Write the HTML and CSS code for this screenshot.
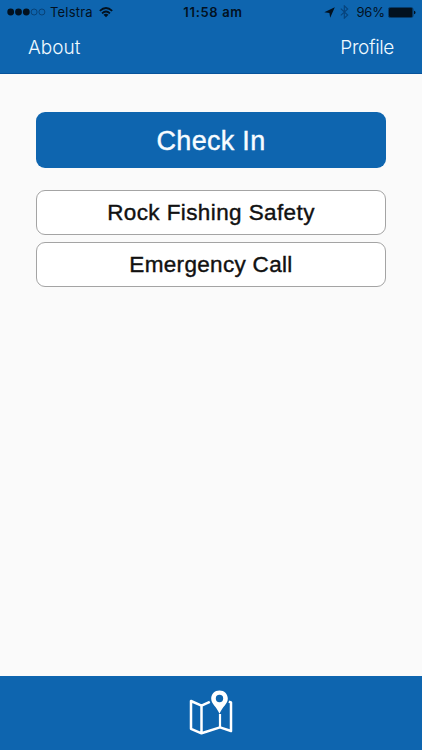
FILE: index.html
```html
<!DOCTYPE html>
<html lang="en">
<head>
<meta charset="utf-8">
<title>Check In</title>
<link rel="stylesheet" href="styles.css">
</head>
<body>
<div class="app">
  <header class="header">
    <div class="status">
      <div class="status-left">
        <svg class="signal" width="39" height="8" viewBox="0 0 39 8">
          <circle cx="3.7" cy="4" r="3.4"/><circle cx="11.5" cy="4" r="3.4"/><circle cx="19.3" cy="4" r="3.4"/>
          <circle class="ring" cx="27.1" cy="4" r="3"/><circle class="ring" cx="34.9" cy="4" r="3"/>
        </svg>
        <span class="carrier">Telstra</span>
        <svg class="wifi" width="14" height="11" viewBox="0 0 14 11">
          <path class="arc" d="M.8 3.9Q7-1.9 13.2 3.9M3 6.3Q7 2.7 11 6.3"/>
          <path d="M4.5 7.7Q7 5.8 9.5 7.7L7 10.3Z"/>
        </svg>
      </div>
      <span class="time">11:58 am</span>
      <div class="status-right">
        <svg class="location" width="11" height="11" viewBox="0 0 11 11"><path d="M10.8.3 6.2 10.8 5.4 6 .3 5.3Z"/></svg>
        <svg class="bluetooth" width="9" height="14" viewBox="0 0 9 14"><path d="M.8 3.7 7.7 10 4.3 13.2V.8L7.7 4 .8 10.3"/></svg>
        <span class="percent">96%</span>
        <svg class="battery" width="28" height="11" viewBox="0 0 28 11">
          <rect class="case" x=".4" y=".5" width="24.6" height="10" rx="1.8"/>
          <rect x="1" y="1" width="23.4" height="9" rx="1"/>
          <path d="M26 3.7Q27.5 4 27.5 5.5T26 7.3Z"/>
        </svg>
      </div>
    </div>
    <nav class="nav"><span class="about">About</span><span class="profile">Profile</span></nav>
  </header>
  <main class="content">
    <button class="button primary"><span>Check In</span></button>
    <button class="button secondary safety"><span>Rock Fishing Safety</span></button>
    <button class="button secondary emergency"><span>Emergency Call</span></button>
  </main>
  <footer class="footer">
    <svg class="map" width="44" height="46" viewBox="0 0 44 46">
      <path class="fold" d="M20.8 11.8 12.5 15.6 2 11V38.8L12.5 43.3 31 37.4 42 41V12.4L39.8 11.6M12.5 15.6V43.3"/>
      <path class="crease" d="M31 24V37.4"/>
      <path class="pin" fill-rule="evenodd" d="M30.5.5C25.7.5 22.2 4 22.2 8.6C22.2 14 27.4 16.5 30.5 23.8C33.6 16.5 38.8 14 38.8 8.6C38.8 4 35.3.5 30.5.5ZM30.5 4.8A3.7 3.7 0 1 1 30.5 12.2A3.7 3.7 0 1 1 30.5 4.8Z"/>
    </svg>
  </footer>
</div>
</body>
</html>
```
FILE: styles.css
```css
* { box-sizing: border-box; }
body { margin: 0; font-family: "Liberation Sans", sans-serif; }
.app { width: 422px; height: 750px; display: flex; flex-direction: column; background: #fafafa; overflow: hidden; }
.header { height: 74px; background: #0e65af; border-bottom: 1px solid #07539b; }
.status { height: 23px; display: grid; grid-template-columns: 1fr auto 1fr; align-items: center; color: #02111f; font: 13px/23px Inter, sans-serif; white-space: nowrap; }
.status svg { fill: #02111f; flex: none; }
.status-left, .status-right { display: flex; align-items: center; }
.status-left { padding-left: 7px; }
.status-right { justify-content: flex-end; padding-right: 6px; }
.signal .ring { fill: none; stroke: #063968; stroke-width: .8; }
.carrier { margin-left: 4px; letter-spacing: .2px; line-height: 24px; }
.wifi { margin-left: 6px; }
.wifi .arc { fill: none; stroke: #02111f; stroke-width: 1.7; }
.time { padding-left: 4px; font-weight: 600; letter-spacing: .65px; line-height: 24px; }
.location { margin-right: 5px; }
.bluetooth { margin-right: 7px; }
.status .bluetooth { fill: none; stroke: #07437b; stroke-width: 1.1; }
.percent { margin-right: 3px; letter-spacing: -.1px; line-height: 24px; }
.battery .case { fill: none; stroke: #063158; stroke-width: .8; }
.nav { display: flex; justify-content: space-between; padding: 1px 28px 0; color: #f0faff; font: 300 19px/48px Inter, sans-serif; }
.profile { letter-spacing: -.35px; }
.content { flex: 1; display: flex; flex-direction: column; padding: 38px 36px 0; }
.button { width: 350px; padding: 0; border-radius: 9px; font-family: "Liberation Sans", sans-serif; }
.primary { height: 56px; margin-bottom: 22px; padding-top: 2px; border: 0; background: #0e65af; color: #f8fcff; font-size: 27px; letter-spacing: .3px; -webkit-text-stroke: .4px; }
.secondary { height: 45px; margin-bottom: 7px; border: 1px solid #a4a4a4; background: #fff; color: #111; font-size: 22.5px; line-height: 43px; -webkit-text-stroke: .4px; }
.safety { letter-spacing: .4px; }
.emergency { letter-spacing: .32px; }
.footer { height: 74px; display: flex; justify-content: center; padding-top: 14px; background: #0e65af; }
.map { fill: none; stroke: #fff; stroke-width: 2.5; stroke-linejoin: round; }
.map .crease { stroke-width: 2.2; }
.map .pin { fill: #fff; stroke: none; }
```
